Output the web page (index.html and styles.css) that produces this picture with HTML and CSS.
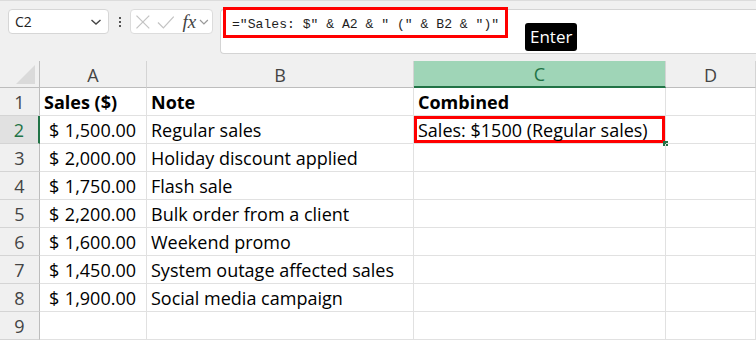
FILE: index.html
```html
<!DOCTYPE html>
<html lang="en">
<head>
    <meta charset="UTF-8">
    <meta name="viewport" content="width=device-width, initial-scale=1.0">
    <title>Combine text - Sheet</title>
    <link rel="stylesheet" href="styles.css">
</head>
<body>
    <div class="toolbar">
        <div class="name-box">
            <span>C2</span>
            <svg width="12" height="8" viewBox="0 0 12 8"><path d="M1.5 2 L6 6 L10.5 2" fill="none" stroke="#444" stroke-width="1.4"/></svg>
        </div>
        <div class="dots"><i></i><i></i><i></i></div>
        <div class="fx-group">
            <svg width="16" height="16" viewBox="0 0 16 16"><path d="M1.5 1.5 L14.5 14.5 M14.5 1.5 L1.5 14.5" stroke="#c4c4c4" stroke-width="1.3"/></svg>
            <svg width="18" height="16" viewBox="0 0 18 16"><path d="M1 8.5 L6.5 14 L17 2.5" fill="none" stroke="#c4c4c4" stroke-width="1.3"/></svg>
            <span class="fx">fx</span>
            <svg width="10" height="8" viewBox="0 0 10 8"><path d="M1 2 L5 6 L9 2" fill="none" stroke="#999" stroke-width="1.2"/></svg>
        </div>
        <div class="formula-box">
            <span class="formula">="Sales: $" &amp; A2 &amp; " (" &amp; B2 &amp; ")"</span>
        </div>
        <div class="mark formula-mark"></div>
        <div class="key-tip">Enter</div>
    </div>

    <div class="sheet">
        <div class="corner"><span class="tri"></span></div>
        <div class="col-head">A</div>
        <div class="col-head">B</div>
        <div class="col-head active">C</div>
        <div class="col-head">D</div>

        <div class="row-head">1</div>
        <div class="cell bold">Sales ($)</div>
        <div class="cell bold">Note</div>
        <div class="cell bold">Combined</div>
        <div class="cell"></div>

        <div class="row-head active">2</div>
        <div class="cell money"><span>$</span><span>1,500.00</span></div>
        <div class="cell">Regular sales</div>
        <div class="cell selected">Sales: $1500 (Regular sales)<span class="handle"></span></div>
        <div class="cell"></div>

        <div class="row-head">3</div>
        <div class="cell money"><span>$</span><span>2,000.00</span></div>
        <div class="cell">Holiday discount applied</div>
        <div class="cell"></div>
        <div class="cell"></div>

        <div class="row-head">4</div>
        <div class="cell money"><span>$</span><span>1,750.00</span></div>
        <div class="cell">Flash sale</div>
        <div class="cell"></div>
        <div class="cell"></div>

        <div class="row-head">5</div>
        <div class="cell money"><span>$</span><span>2,200.00</span></div>
        <div class="cell">Bulk order from a client</div>
        <div class="cell"></div>
        <div class="cell"></div>

        <div class="row-head">6</div>
        <div class="cell money"><span>$</span><span>1,600.00</span></div>
        <div class="cell">Weekend promo</div>
        <div class="cell"></div>
        <div class="cell"></div>

        <div class="row-head">7</div>
        <div class="cell money"><span>$</span><span>1,450.00</span></div>
        <div class="cell">System outage affected sales</div>
        <div class="cell"></div>
        <div class="cell"></div>

        <div class="row-head">8</div>
        <div class="cell money"><span>$</span><span>1,900.00</span></div>
        <div class="cell">Social media campaign</div>
        <div class="cell"></div>
        <div class="cell"></div>

        <div class="row-head">9</div>
        <div class="cell"></div>
        <div class="cell"></div>
        <div class="cell"></div>
        <div class="cell"></div>
    </div>
</body>
</html>
```

FILE: styles.css
```css
body {
    margin: 0;
    width: 756px;
    height: 340px;
    overflow: hidden;
    background: #f0f0f0;
    font-family: "Open Sans", "Noto Sans", sans-serif;
    color: #000;
}
.toolbar {
    position: relative;
    height: 53px;
    display: flex;
    align-items: flex-start;
    padding: 8px 0 0 8px;
    box-sizing: border-box;
    border-top: 1px solid #dcdcdc;
}
.name-box {
    width: 101px;
    height: 25px;
    box-sizing: border-box;
    background: #fff;
    border: 1px solid #d6d6d6;
    border-radius: 4px;
    display: flex;
    align-items: center;
    justify-content: space-between;
    padding: 0 6px 0 6px;
    font-family: "Open Sans", sans-serif;
    font-size: 14px;
    color: #222;
}
.dots {
    width: 21px;
    height: 25px;
    display: flex;
    flex-direction: column;
    align-items: center;
    justify-content: center;
    gap: 2px;
}
.dots i {
    width: 2px;
    height: 2px;
    background: #555;
}
.fx-group {
    width: 83px;
    height: 25px;
    box-sizing: border-box;
    background: #fff;
    border: 1px solid #dcdcdc;
    border-radius: 4px;
    display: flex;
    align-items: center;
    gap: 6px;
    padding: 0 3px 0 4px;
}
.fx {
    font-family: "Liberation Serif", serif;
    font-style: italic;
    font-size: 19px;
    color: #444;
    margin-left: 2px;
    margin-right: -3px;
    line-height: 20px;
}
.formula-box {
    flex: 1;
    height: 45px;
    margin-left: 7px;
    box-sizing: border-box;
    background: #fff;
    border: 1px solid #d4d4d4;
    border-right: none;
    border-radius: 4px 0 0 4px;
    padding: 1px 0 0 11px;
}
.formula {
    font-family: "Liberation Mono", monospace;
    font-size: 13.1px;
    color: #1e1e1e;
    white-space: pre;
}
.mark {
    position: absolute;
    border: 3px solid #f00;
    box-sizing: border-box;
}
.formula-mark {
    left: 223px;
    top: 6px;
    width: 285px;
    height: 31px;
}
.key-tip {
    position: absolute;
    left: 525px;
    top: 22px;
    height: 28px;
    padding: 0 5px;
    background: #000;
    color: #fff;
    border-radius: 3px;
    font-family: "Open Sans", sans-serif;
    font-size: 17px;
    line-height: 28px;
}
.sheet {
    display: grid;
    grid-template-columns: 40px 107px 267px 252px 1fr;
    grid-template-rows: 27px repeat(9, 28px);
    margin-top: 8px;
    background: #fff;
}
.corner {
    background: #f0f0f0;
    border-bottom: 1px solid #bdbdbd;
    border-right: 1px solid #bdbdbd;
    position: relative;
}
.tri {
    position: absolute;
    right: 4px;
    bottom: 3px;
    width: 0;
    height: 0;
    border-left: 19px solid transparent;
    border-bottom: 19px solid #dadada;
}
.col-head {
    background: #f0f0f0;
    border-bottom: 1px solid #bdbdbd;
    border-right: 1px solid #d4d4d4;
    text-align: center;
    font-size: 18px;
    line-height: 26px;
    padding-top: 1px;
    color: #444;
}
.col-head.active {
    background: #9fd5b7;
    color: #217346;
    border-bottom: 2px solid #217346;
    line-height: 24px;
}
.row-head {
    background: #f0f0f0;
    border-right: 1px solid #bdbdbd;
    border-bottom: 1px solid #d4d4d4;
    text-align: center;
    font-size: 18px;
    line-height: 25px;
    padding-top: 2px;
    color: #444;
}
.row-head.active {
    background: #e1e1e1;
    color: #217346;
    border-right: 2px solid #217346;
}
.cell {
    border-right: 1px solid #e1e1e1;
    border-bottom: 1px solid #e1e1e1;
    padding: 2px 4px 0;
    font-size: 18px;
    line-height: 25px;
    white-space: nowrap;
    position: relative;
}
.bold {
    font-weight: bold;
}
.money {
    display: flex;
    justify-content: space-between;
    padding: 2px 10px 0 9px;
}
.selected {
    box-shadow: inset 0 0 0 3px #f00;
}
.handle {
    position: absolute;
    right: -3px;
    bottom: -3px;
    width: 5px;
    height: 5px;
    background: #217346;
}
```
